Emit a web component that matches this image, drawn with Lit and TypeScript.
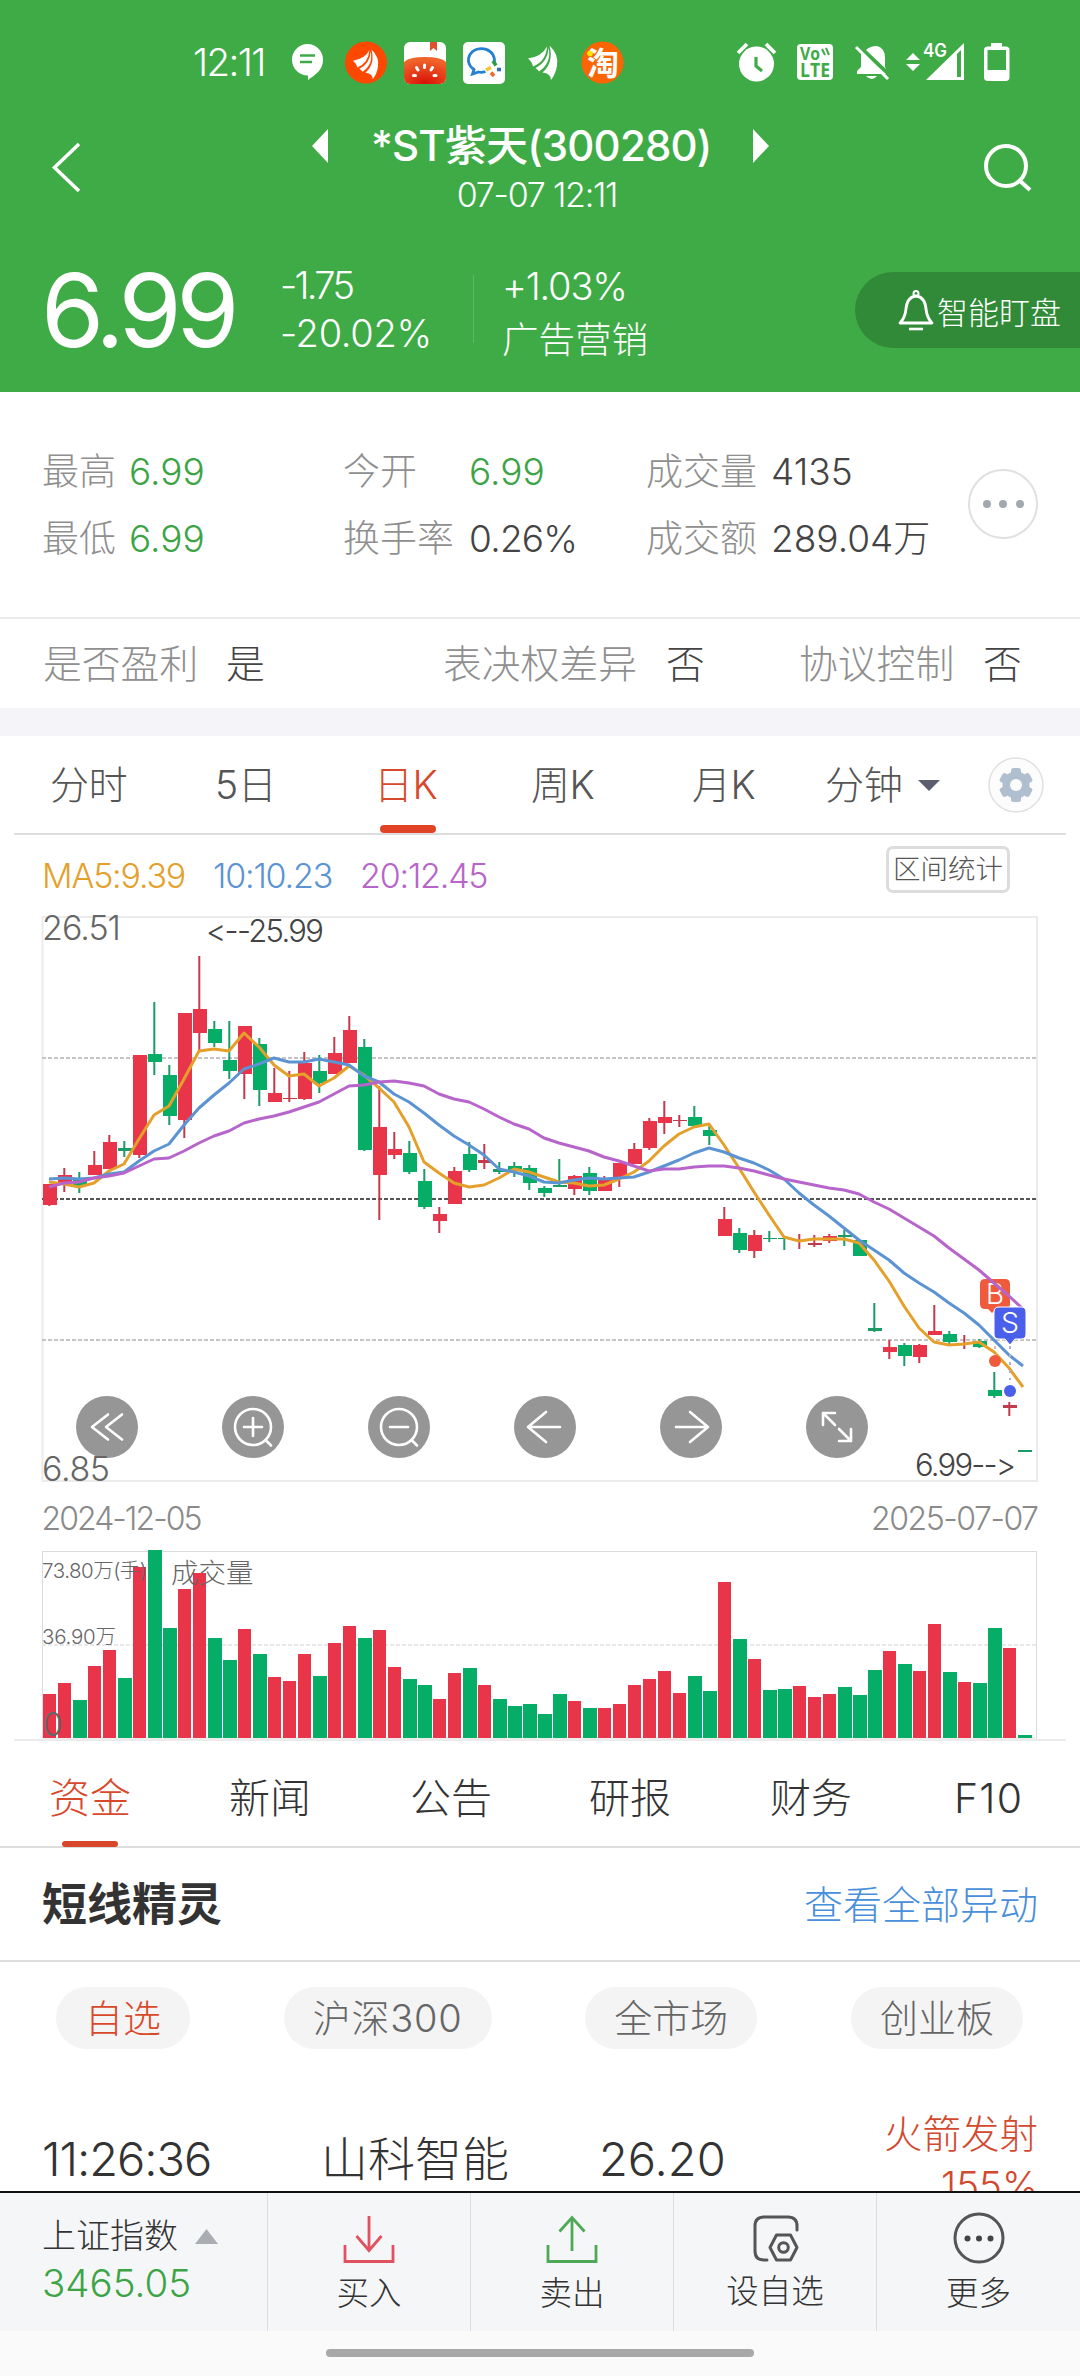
import { LitElement, html, svg, css } from "lit";
import { customElement } from "lit/decorators.js";
import { classMap } from "lit/directives/class-map.js";

type Candle = [string, number, number, number, number];

/* colour, high, body top, body bottom, low (chart pixels) */
const CANDLES: Candle[] = [
  ["r",1184,1184,1205,1206],["r",1168,1175,1182,1192],["g",1172,1180,1186,1193],["r",1151,1165,1175,1175],
  ["r",1135,1142,1169,1169],["g",1141,1148,1151,1157],["r",1055,1055,1155,1158],["g",1002,1054,1062,1075],
  ["g",1065,1075,1116,1125],["r",1013,1013,1120,1138],["r",956,1009,1033,1051],["g",1021,1029,1043,1047],
  ["g",1021,1060,1071,1079],["r",1026,1026,1074,1099],["g",1038,1044,1090,1106],["r",1068,1093,1102,1102],
  ["r",1071,1098,1099,1102],["r",1052,1063,1099,1100],["g",1055,1071,1083,1093],["r",1037,1053,1074,1074],
  ["r",1016,1030,1063,1063],["g",1039,1047,1150,1151],["r",1086,1127,1175,1220],["r",1132,1149,1155,1159],
  ["g",1141,1153,1172,1174],["g",1169,1181,1207,1209],["r",1207,1214,1221,1233],["r",1167,1171,1204,1204],
  ["g",1142,1154,1170,1172],["r",1144,1160,1163,1169],["g",1162,1169,1172,1174],["g",1162,1166,1170,1177],
  ["g",1165,1168,1183,1190],["g",1186,1188,1193,1197],["g",1159,1185,1187,1187],["r",1175,1176,1189,1195],
  ["g",1167,1173,1191,1195],["r",1176,1179,1191,1191],["r",1163,1163,1177,1187],["r",1143,1149,1164,1164],
  ["r",1118,1121,1148,1150],["r",1101,1117,1123,1134],["r",1115,1120,1121,1127],["g",1106,1117,1126,1126],
  ["g",1126,1130,1136,1145],["r",1207,1219,1236,1236],["g",1228,1233,1250,1253],["r",1230,1235,1251,1258],
  ["g",1231,1238,1239,1242],["g",1238,1238,1239,1250],["r",1234,1240,1241,1249],["r",1235,1243,1245,1247],
  ["r",1234,1236,1241,1243],["g",1230,1235,1237,1246],["g",1240,1240,1256,1256],["g",1303,1328,1331,1332],
  ["r",1340,1347,1352,1359],["g",1343,1345,1356,1366],["r",1344,1345,1357,1363],["r",1305,1331,1335,1335],
  ["g",1331,1334,1342,1345],["r",1335,1343,1344,1349],["g",1339,1341,1347,1348],["g",1372,1390,1396,1398],
  ["r",1402,1405,1408,1416],["g",1450,1450,1452,1452],
];

const VOLUME_TOPS = [
  1694,1683,1700,1666,1650,1678,1567,1550,1628,1589,1573,1638,1660,1629,1654,1677,1681,1654,1676,1643,1626,1638,
  1630,1667,1679,1685,1699,1673,1668,1685,1699,1706,1704,1714,1694,1701,1708,1708,1704,1685,1679,1671,1693,1676,
  1691,1582,1639,1659,1690,1689,1686,1697,1694,1687,1695,1670,1651,1664,1671,1624,1672,1682,1683,1628,1648,1735,
];

const MA5 = [1182,1184,1187,1183,1171,1164,1139,1115,1106,1079,1051,1049,1051,1033,1047,1065,1076,1074,1086,1078,
  1066,1075,1088,1102,1127,1162,1173,1183,1187,1185,1178,1169,1172,1177,1182,1183,1186,1185,1179,1172,1161,1146,
  1134,1127,1124,1145,1168,1192,1215,1237,1241,1239,1239,1239,1243,1260,1281,1306,1328,1342,1345,1344,1342,1352,1368,1387];
const MA10 = [1179,1178,1179,1178,1174,1172,1161,1151,1144,1125,1108,1095,1083,1069,1064,1058,1062,1062,1059,1062,
  1065,1076,1082,1094,1102,1113,1125,1136,1145,1155,1169,1172,1176,1182,1183,1180,1178,1179,1178,1177,1172,1166,
  1160,1153,1148,1152,1158,1163,1170,1179,1193,1205,1216,1228,1240,1250,1260,1273,1283,1292,1303,1313,1325,1340,1355,1366];
const MA20 = [1187,1183,1182,1178,1176,1173,1166,1159,1158,1151,1143,1136,1131,1123,1119,1116,1112,1107,1102,1094,
  1086,1085,1082,1081,1083,1086,1094,1099,1102,1109,1117,1124,1129,1138,1143,1147,1151,1157,1161,1166,1171,1169,
  1169,1167,1166,1166,1168,1171,1175,1179,1182,1185,1188,1190,1194,1202,1209,1218,1227,1236,1248,1259,1270,1283,1296,1309];

const RED = "#e93549";
const GREEN = "#05ad66";
const DARK_RED = "#c23a4c";
const DARK_GREEN = "#1b9c67";

const points = (ys: number[]) => ys.map((y, i) => `${i === 65 ? 1023 : 49 + 15 * i},${y}`).join(" ");

const sharedText = css`
  * { box-sizing: border-box; }
  :host { flex: none; }
  .num { font-family: Inter, "Noto Sans CJK SC", sans-serif; letter-spacing: 0; }
`;

@customElement("status-bar")
export class StatusBar extends LitElement {
  static styles = [sharedText, css`
    :host { display: flex; height: 124px; padding-left: 193px; color: #fff; }
    .time { width: 99px; padding-top: 43px; font-size: 38.500px; line-height: 38px; white-space: nowrap; letter-spacing: -0.042em; }
    svg { display: block; }
    .lte { font: 700 20px/1 "Open Sans", sans-serif; }
    .net { font: 600 18px/1 Inter, sans-serif; }
    .tao { font: 700 32px/1 "Noto Sans CJK SC", sans-serif; }
  `];
  render() {
    const leaf = svg`<path d="M0 13Q14 11 19 1Q18 16 5 21Q4 16 0 13ZM20.500 2Q24 17 11 26Q10 24 7.500 22.500Q20 16 20.500 2ZM21.500 0Q31 9 29 20Q28 28 23 34.500Q23 28 14.500 27Q26 17 21.500 0Z"/>`;
    return html`
      <div class="time num">12:11</div>
      <svg width="788" height="124" viewBox="292 0 788 124">
        <path fill="#fff" d="M307.500 44a15.500 15.500 0 0 1 15.500 16c0 10-8 15-15 20v-4.500a15.500 15.500 0 0 1-.5-31.500z"/>
        <path stroke="#3fab46" stroke-width="2.600" d="M300 55.500h15M300 62h12"/>
        <circle cx="366" cy="62.500" r="21" fill="#fd4802"/>
        <g fill="#fff" transform="translate(353 49.500) scale(.86)">${leaf}</g>
        <defs>
          <radialGradient id="tomato" cx=".5" cy="1" r=".9"><stop offset="0" stop-color="#d80e06"/><stop offset="1" stop-color="#f0642a"/></radialGradient>
          <clipPath id="tile"><rect x="404" y="42" width="42" height="42" rx="6"/></clipPath>
        </defs>
        <g clip-path="url(#tile)">
          <rect x="404" y="42" width="42" height="42" fill="#fff"/>
          <path fill="#e0502c" d="M430 42h7v9l-3.500-3-3.500 3z"/>
          <path fill="url(#tomato)" d="M404 62q5-5 21-5t21 5v22h-42z"/>
          <path stroke="#fff" stroke-width="3" stroke-linecap="round" d="M424.500 65v2.500M416.500 67.500l1.500 2.500M432.500 67.500l-1.500 2.500M413.500 75.500h2M434 75.500h2"/>
        </g>
        <rect x="463" y="42" width="42" height="42" rx="5" fill="#fff"/>
        <path fill="none" stroke="#2380d2" stroke-width="2.800" d="M494 63a13 11.500 0 1 0-20 6.500l-1.500 4.500 6-2q3 1 7-.5"/>
        <path stroke="#2a9a45" stroke-width="3.600" d="M493 61l3 4.500"/><path stroke="#2a70c8" stroke-width="3.600" d="M497 69.500l4 0"/>
        <path stroke="#f06a30" stroke-width="3.600" d="M491 72.500l3 3.500"/><path stroke="#f7c22d" stroke-width="3.600" d="M486 70l5-2.500"/>
        <g fill="#fff" transform="translate(528 45.500)">${leaf}</g>
        <circle cx="602.500" cy="62.500" r="21" fill="#fb6503"/>
        <text class="tao" x="587" y="74.500" fill="#fff">淘</text>
        <circle cx="590" cy="53.500" r="2.800" fill="#ffe600"/>

        <circle cx="756.500" cy="64" r="17.500" fill="#fff"/>
        <path fill="none" stroke="#fff" stroke-width="3.800" d="M738 53l9-9M775 53l-9-9"/>
        <path fill="none" stroke="#3fab46" stroke-width="3.200" d="M756 57v9l6 5"/>
        <rect x="797" y="44" width="36" height="36" rx="4" fill="#fff"/>
        <text class="lte" x="800" y="60" fill="#3fab46" textLength="20" lengthAdjust="spacingAndGlyphs" style="font-size:17px">Vo</text>
        <path fill="none" stroke="#3fab46" stroke-width="2" d="M822 49l3 6M826 48l3 7"/>
        <text class="lte" x="800" y="77" fill="#3fab46" textLength="30" lengthAdjust="spacingAndGlyphs" style="font-size:19px">LTE</text>
        <path fill="#fff" d="M861 52l25 22h-29v-3l4-4zM866 50q4-4 11-4 8 2 8 12v9l1 2zM866 76h11q-5 6-11 0z"/>
        <path stroke="#fff" stroke-width="3" d="M856 47l32 32"/>
        <path fill="#fff" d="M906 60l7-7 7 7zM906 64h14l-7 7z"/>
        <text class="net" x="923" y="57" fill="#fff" textLength="24" lengthAdjust="spacingAndGlyphs">4G</text>
        <path fill="#fff" fill-rule="evenodd" d="M926 80l38-37v37zM957 54v23h4V50z"/>
        <path fill="#fff" d="M991 43h11v6h-11z"/>
        <rect x="985.750" y="48.250" width="22" height="31" rx="2" fill="none" stroke="#fff" stroke-width="3.500"/>
        <rect x="986" y="70" width="21" height="10" fill="#fff"/>
      </svg>
    `;
  }
}

@customElement("quote-header")
export class QuoteHeader extends LitElement {
  static styles = [sharedText, css`
    :host { display: block; height: 268px; color: #fff; font-family: Inter, "Noto Sans CJK SC", sans-serif; font-weight: 300; white-space: nowrap; }
    .nav { display: flex; justify-content: space-between; height: 124px; padding: 0 48px; }
    svg { display: block; flex: none; }
    .back { margin-top: 17px; }
    .search { margin-top: 17px; }
    .mid { display: flex; flex-direction: column; align-items: center; margin-left: 11px; }
    .title { display: flex; align-items: center; height: 46px; gap: 43px; font-size: 42px; line-height: 1; font-weight: 500; margin-top: -1px; }
    .name { letter-spacing: -0.02em; width: 339px; text-align: center; }
    .date { font-size: 34px; line-height: 34px; margin: 9px 7px 0 0; letter-spacing: -0.037em; }
    .quote { display: flex; height: 144px; padding-left: 41px; }
    .price { width: 239px; font-size: 102px; line-height: 76px; font-weight: 400; letter-spacing: -0.054em; padding-top: 24px; }
    .pair { display: flex; flex-direction: column; gap: 10px; padding-top: 18px; font-size: 38px; line-height: 38px; }
    .change { width: 193px; letter-spacing: -0.008em; }
    .change span:first-child { letter-spacing: -0.07em; }
    .sector { padding-left: 28px; border-left: 1px solid #5db863; height: 68px; margin-top: 27px; padding-top: 0; width: 382px; }
    .sector span { margin-top: -8px; letter-spacing: -0.03em; }
    .sector span + span { font-size: 36.500px; margin-top: 6px; letter-spacing: 0; }
    .watch { display: flex; align-items: center; width: 225px; height: 76px; margin-top: 24px; padding-left: 43px; gap: 3px; border-radius: 38px 0 0 38px; background: #308a37; font-size: 31px; }
  `];
  render() {
    return html`
      <div class="nav">
        <svg class="back" width="40" height="52" viewBox="0 0 40 52"><path fill="none" stroke="#fff" stroke-width="3.500" d="M31 3L6.500 26.500 31 50"/></svg>
        <div class="mid">
          <div class="title">
            <svg width="16" height="34" viewBox="0 0 16 34"><path fill="#fff" d="M16 0v34L0 17z"/></svg>
            <span class="name">*ST紫天(300280)</span>
            <svg width="16" height="34" viewBox="0 0 16 34"><path fill="#fff" d="M0 0v34l16-17z"/></svg>
          </div>
          <div class="date">07-07 12:11</div>
        </div>
        <svg class="search" width="50" height="52" viewBox="981 141 50 52"><circle cx="1005" cy="166" r="20" fill="none" stroke="#fff" stroke-width="4"/><path stroke="#fff" stroke-width="4" d="M1018 180l11 10"/></svg>
      </div>
      <div class="quote">
        <div class="price">6.99</div>
        <div class="pair change num"><span>-1.75</span><span>-20.02%</span></div>
        <div class="pair sector"><span class="num">+1.03%</span><span>广告营销</span></div>
        <div class="watch">
          <svg width="36" height="42" viewBox="0 0 36 42"><path fill="none" stroke="#fff" stroke-width="2.800" stroke-linejoin="round" d="M2 34q5-5 6-14 1-12 10-13 9 1 10 13 1 9 6 14z"/><circle cx="18" cy="4.500" r="2.500" fill="none" stroke="#fff" stroke-width="2"/><path stroke="#fff" stroke-width="2.600" d="M11 40h14"/></svg>
          <span>智能盯盘</span>
        </div>
      </div>
    `;
  }
}

@customElement("stock-facts")
export class StockFacts extends LitElement {
  static styles = [sharedText, css`
    :host { display: block; height: 316px; border-bottom: 28px solid #f4f4f9; font-family: Inter, "Noto Sans CJK SC", sans-serif; font-weight: 300; color: #444; white-space: nowrap; }
    .top { display: flex; height: 225px; padding: 46px 0 0 42px; }
    .grid { display: grid; grid-template-columns: 87px 214px 126px 177px 125px 197px; grid-auto-rows: 67px; align-items: center; font-size: 37px; line-height: 1; height: 134px; }
    .label { color: #8f8f8f; }
    .up { color: #3da445; }
    .pct { letter-spacing: -0.02em; }
    .more { display: flex; align-items: center; justify-content: center; gap: 8.500px; width: 70px; height: 70px; margin-top: 31px; border: 2px solid #e0e0e0; border-radius: 50%; }
    .dot { width: 8px; height: 8px; border-radius: 50%; background: #a3a7b0; }
    .flags { display: grid; grid-template-columns: 183px 217px 223px 133px 184px 1fr; align-items: center; height: 91px; padding: 2px 0 0 43px; border-top: 2px solid #ebebeb; font-size: 38.800px; line-height: 1; }
  `];
  render() {
    return html`
      <div class="top">
        <div class="grid">
          <span class="label">最高</span><span class="num up">6.99</span>
          <span class="label">今开</span><span class="num up">6.99</span>
          <span class="label">成交量</span><span class="num">4135</span>
          <span class="label">最低</span><span class="num up">6.99</span>
          <span class="label">换手率</span><span class="num pct">0.26%</span>
          <span class="label">成交额</span><span class="num">289.04万</span>
        </div>
        <div class="more"><i class="dot"></i><i class="dot"></i><i class="dot"></i></div>
      </div>
      <div class="flags">
        <span class="label">是否盈利</span><span>是</span>
        <span class="label">表决权差异</span><span>否</span>
        <span class="label">协议控制</span><span>否</span>
      </div>
    `;
  }
}

@customElement("kline-panel")
export class KlinePanel extends LitElement {
  static styles = [sharedText, css`
    :host { display: block; height: 1006px; font-family: Inter, "Noto Sans CJK SC", sans-serif; font-weight: 300; color: #555; white-space: nowrap; }
    svg { display: block; }
    text { font-variant-ligatures: none; font-feature-settings: "calt" 0; }
    .tabs { display: grid; grid-template-columns: 165px 159px 157px 161px 133px 161px 1fr; height: 99px; margin: 0 14px; padding-left: 36px; border-bottom: 2px solid #ddd; font-size: 39px; line-height: 98px; }
    .tab { position: relative; height: 97px; letter-spacing: -0.01em; }
    .active { color: #d8492c; }
    .active::after { content: ""; position: absolute; left: 6px; bottom: 0; width: 56px; height: 8px; border-radius: 4px; background: #e04425; }
    .minutes { display: flex; align-items: center; gap: 15px; height: 98px; }
    .gear { margin: 21px 0 0 2px; }
    .legend { display: flex; align-items: flex-start; height: 73px; padding: 11px 70px 0 42px; font-size: 34px; }
    .legend span { line-height: 60px; letter-spacing: -0.035em; }
    .ma5 { color: #e5a02c; width: 171px; }
    .ma10 { color: #5b93d3; width: 147px; }
    .ma20 { color: #b765cb; flex: 1; }
    .range { width: 124px; height: 47px; border: 3px solid #dcdcdc; border-radius: 7px; font-size: 27.500px; line-height: 41px; text-align: center; color: #555; }
    .axis { fill: #666; font-size: 34px; }
    .mark { fill: #444; font-size: 31px; }
    .date { fill: #8a8a8a; font-size: 32px; }
    .small { fill: #666; font-size: 20.500px; }
    .name { fill: #666; font-size: 27.500px; }
    .flag { fill: #fff; font-size: 29px; }
  `];

  private candle([c, high, top, bottom, low]: Candle, i: number) {
    return svg`<rect x=${48.300 + 15 * i} y=${high} width="2" height=${low - high} fill=${c === "r" ? DARK_RED : DARK_GREEN}/>
      <rect x=${43 + 15 * i} y=${top} width="14" height=${Math.max(1, bottom - top)} fill=${bottom - top < 4 ? (c === "r" ? DARK_RED : DARK_GREEN) : c === "r" ? RED : GREEN}/>`;
  }

  private tool(x: number, icon: unknown) {
    return svg`<g transform="translate(${x} 1427)"><circle r="31" fill="#969696"/><g fill="none" stroke="#fff" stroke-width="2.600" stroke-linecap="round" stroke-linejoin="round">${icon}</g></g>`;
  }

  render() {
    const tabs = ["分时", "5日", "日K", "周K", "月K"];
    return html`
      <div class="tabs">
        ${tabs.map((t, i) => html`<span class=${classMap({ tab: true, active: i === 2 })}>${t}</span>`)}
        <span class="minutes">分钟<svg width="22" height="11" viewBox="0 0 22 11"><path fill="#5c5e70" d="M0 0h22L11 11z"/></svg></span>
        <svg class="gear" width="56" height="56" viewBox="-28 -28 56 56">
          <circle r="27" fill="#fcfcfc" stroke="#e0e0e0" stroke-width="1.500"/>
          <g fill="#afbfcf">
            <circle r="13.500"/>
            ${[0, 60, 120].map((a) => svg`<rect x="-5" y="-17" width="10" height="34" rx="2.500" transform="rotate(${a})"/>`)}
          </g>
          <circle r="6" fill="#fcfcfc"/>
        </svg>
      </div>
      <div class="legend">
        <span class="ma5">MA5:9.39</span><span class="ma10">10:10.23</span><span class="ma20">20:12.45</span>
        <div class="range">区间统计</div>
      </div>
      <svg width="1080" height="834" viewBox="0 908 1080 834">
        <rect x="42.500" y="917" width="994.500" height="564" fill="none" stroke="#ebebeb" stroke-width="2"/>
        <g stroke-dasharray="4 2" stroke-width="2">
          <path stroke="#c4c4c4" d="M42 1058H1036M42 1340H1036"/>
          <path stroke="#555" d="M42 1199H1036"/>
        </g>
        ${CANDLES.map((c, i) => this.candle(c, i))}

        <path fill="#ef5a3d" d="M985 1279h20q5 0 5 5v20q0 5-5 5h-9l-4 4-4-4h-3q-5 0-5-5v-20q0-5 5-5z"/>
        <text class="flag" x="986" y="1304" textLength="18" lengthAdjust="spacingAndGlyphs">B</text>
        <g fill="none" stroke-width="3" stroke-linejoin="round">
          <polyline stroke="#e5a02c" points=${points(MA5)}/>
          <polyline stroke="#5b93d3" points=${points(MA10)}/>
          <polyline stroke="#b765cb" points=${points(MA20)}/>
        </g>
        <path fill="#4a60ea" stroke="#fff" stroke-width="1" d="M999 1307h22q5 0 5 5v22q0 5-5 5h-6l-5 6-5-6h-6q-5 0-5-5v-22q0-5 5-5z"/>
        <text class="flag" x="1001" y="1333" textLength="18" lengthAdjust="spacingAndGlyphs">S</text>
        <path stroke="#a8b2d0" stroke-width="2" stroke-dasharray="3 5" d="M1010 1346v34"/>
        <path stroke="#e8b9a8" stroke-width="2" stroke-dasharray="3 5" d="M995 1346v9"/>
        <circle cx="995" cy="1361" r="6" fill="#ef5a3d"/>
        <circle cx="1010" cy="1391" r="6" fill="#4a60ea"/>

        ${this.tool(107, svg`<path d="M1-12.500L-15 0 1 12.500M15-12.500L-1 0 15 12.500"/>`)}
        ${this.tool(253, svg`<circle r="18"/><path d="M0-9V9M-9 0H9M13 13.500l5 5"/>`)}
        ${this.tool(399, svg`<circle r="18"/><path d="M-9 0H9M13 13.500l5 5"/>`)}
        ${this.tool(545, svg`<path d="M1-15L-17 0 1 15M-17 0H15"/>`)}
        ${this.tool(691, svg`<path d="M-1-15L17 0-1 15M17 0H-15"/>`)}
        ${this.tool(837, svg`<path d="M-2-2L-14-14M-14-2V-14H-2M2 2L14 14M14 2V14H2"/>`)}

        <text class="axis" x="42" y="940" textLength="79">26.51</text>
        <text class="mark" x="206" y="942" textLength="118">&lt;--25.99</text>
        <text class="axis" x="42" y="1481" textLength="68">6.85</text>
        <text class="mark" x="915" y="1476" textLength="101">6.99--&gt;</text>
        <text class="date" x="41.500" y="1530" textLength="161">2024-12-05</text>
        <text class="date" x="871" y="1530" textLength="168">2025-07-07</text>

        <rect x="42.500" y="1551.500" width="994" height="186.500" fill="none" stroke="#dcdcdc"/>
        <path stroke="#e8e8e8" stroke-width="2" stroke-dasharray="4 2" d="M42 1645H1036"/>
        ${VOLUME_TOPS.map((y, i) => {
          const red = CANDLES[i][0] === "r";
          return svg`<rect x=${43 + 15 * i} y=${y} width=${red ? 13 : 14} height=${1738 - y} fill=${red ? RED : GREEN}/>`;
        })}
        <rect x="14" y="1739" width="1052" height="2" fill="#ebebeb"/>
        <text class="small" x="42" y="1578" textLength="105">73.80万(手)</text>
        <text class="small" x="42" y="1644" textLength="74">36.90万</text>
        <text class="name" x="171" y="1583">成交量</text>
        <text class="axis" x="43" y="1736" textLength="20" style="font-size:32px">0</text>
      </svg>
    `;
  }
}

@customElement("news-panel")
export class NewsPanel extends LitElement {
  static styles = [sharedText, css`
    :host { display: block; height: 449px; overflow: hidden; font-family: Inter, "Noto Sans CJK SC", sans-serif; font-weight: 300; color: #333; white-space: nowrap; }
    .tabs { display: grid; grid-template-columns: 180px 181px 179px 181px 184px 1fr; height: 106px; padding-left: 49px; border-bottom: 2px solid #ddd; font-size: 41px; line-height: 112px; }
    .tab { position: relative; height: 105px; }
    .tab.num { letter-spacing: 0.03em; }
    .active { color: #d8492c; }
    .active::after { content: ""; position: absolute; left: 13px; bottom: 0; width: 56px; height: 6px; border-radius: 3px; background: #d9472a; }
    .head { display: flex; justify-content: space-between; align-items: center; height: 114px; padding: 0 42px 0 42px; border-bottom: 2px solid #ddd; }
    .head strong { font-size: 45px; font-weight: 700; line-height: 1; }
    .head span { font-size: 39px; color: #4a8fdb; line-height: 1; }
    .pills { display: flex; padding: 25px 57px 0 56px; justify-content: space-between; font-size: 38px; color: #666; }
    .pill { height: 62px; line-height: 62px; padding: 0 29px; border-radius: 31px; background: #f4f4f4; }
    .pill:nth-child(2) { letter-spacing: 0.02em; }
    .on { color: #d8492c; }
    .row { display: grid; grid-template-columns: 279px 278px 200px 1fr; padding: 63px 42px 0 42px; font-size: 47px; line-height: 94px; }
    .row > .num:first-child { letter-spacing: -0.022em; }
    .event { display: flex; flex-direction: column; align-items: flex-end; color: #d2492f; font-size: 38.500px; line-height: 46px; margin-top: -1px; }
    .event span + span { margin-top: 5px; }
  `];
  render() {
    return html`
      <div class="tabs">
        ${["资金", "新闻", "公告", "研报", "财务"].map((t, i) => html`<span class=${classMap({ tab: true, active: i === 0 })}>${t}</span>`)}
        <span class="tab num">F10</span>
      </div>
      <div class="head"><strong>短线精灵</strong><span>查看全部异动</span></div>
      <div class="pills">
        ${["自选", "沪深300", "全市场", "创业板"].map((t, i) => html`<span class=${classMap({ pill: true, on: i === 0 })}>${t}</span>`)}
      </div>
      <div class="row">
        <span class="num">11:26:36</span><span>山科智能</span><span class="num">26.20</span>
        <div class="event"><span>火箭发射</span><span class="num">155%</span></div>
      </div>
    `;
  }
}

@customElement("bottom-bar")
export class BottomBar extends LitElement {
  static styles = [sharedText, css`
    :host { display: block; height: 185px; background: #fafafa; font-family: Inter, "Noto Sans CJK SC", sans-serif; font-weight: 300; color: #333; white-space: nowrap; }
    .bar { display: grid; grid-template-columns: 267px 203px 203px 203px 204px; height: 140px; border-top: 2px solid #111; background: #f5f6f8; }
    .cell { display: flex; flex-direction: column; align-items: center; border-left: 1px solid #dcdde0; padding-top: 16px; font-size: 32.500px; line-height: 34px; }
    .cell span { margin-top: 8px; }
    .cell .up { margin-top: 6px; }
    .index { padding: 25px 0 0 42px; font-size: 34px; line-height: 36px; }
    .name { display: flex; align-items: center; gap: 17px; }
    .value { font-size: 38.500px; line-height: 38px; margin-top: 10px; color: #3da445; }
    svg { display: block; }
    .home { width: 428px; height: 8px; margin: 18px auto 0; border-radius: 4px; background: #a8a8a8; }
  `];
  render() {
    return html`
      <div class="bar">
        <div class="index">
          <div class="name">上证指数<svg width="23" height="15" viewBox="0 0 23 15"><path fill="#aaadb2" d="M11.500 0L23 15H0z"/></svg></div>
          <div class="value num">3465.05</div>
        </div>
        <div class="cell">
          <svg width="60" height="60" viewBox="0 0 60 60"><path fill="none" stroke="#e05260" stroke-width="2.800" d="M6 36v16.500h48V36M30 7v34M17.500 27L30 41.500 42.500 27"/></svg><span>买入</span>
        </div>
        <div class="cell">
          <svg width="60" height="60" viewBox="0 0 60 60"><path fill="none" stroke="#4ea956" stroke-width="2.800" d="M6 36v16.500h48V36M30 42V9M17.500 22.500L30 8.500 42.500 22.500"/></svg><span>卖出</span>
        </div>
        <div class="cell">
          <svg width="60" height="60" viewBox="0 0 60 60"><g fill="none" stroke="#555" stroke-width="3" stroke-linecap="round"><path d="M22 51h-3q-9 0-9-9V17q0-9 9-9h24q9 0 9 9v4"/><path stroke-linejoin="round" d="M31.500 26h14l6.500 12.500L45.500 51h-14L25 38.500z"/><circle cx="38.500" cy="38.500" r="4.800"/></g></svg><span class="up">设自选</span>
        </div>
        <div class="cell">
          <svg width="60" height="60" viewBox="0 0 60 60"><circle cx="30" cy="29" r="24" fill="none" stroke="#555" stroke-width="3"/><g fill="#444"><circle cx="18.500" cy="29.500" r="3"/><circle cx="30" cy="29.500" r="3"/><circle cx="41.500" cy="29.500" r="3"/></g></svg><span>更多</span>
        </div>
      </div>
      <div class="home"></div>
    `;
  }
}

@customElement("app-root")
export class AppRoot extends LitElement {
  static styles = css`
    :host { display: flex; flex-direction: column; width: 1080px; height: 2376px; overflow: hidden; background: #fff; font-family: Inter, "Noto Sans CJK SC", sans-serif; font-weight: 300; }
    .green { flex: none; background: #3fab46; }
  `;
  render() {
    return html`
      <div class="green"><status-bar></status-bar><quote-header></quote-header></div>
      <stock-facts></stock-facts>
      <kline-panel></kline-panel>
      <news-panel></news-panel>
      <bottom-bar></bottom-bar>
    `;
  }
}
